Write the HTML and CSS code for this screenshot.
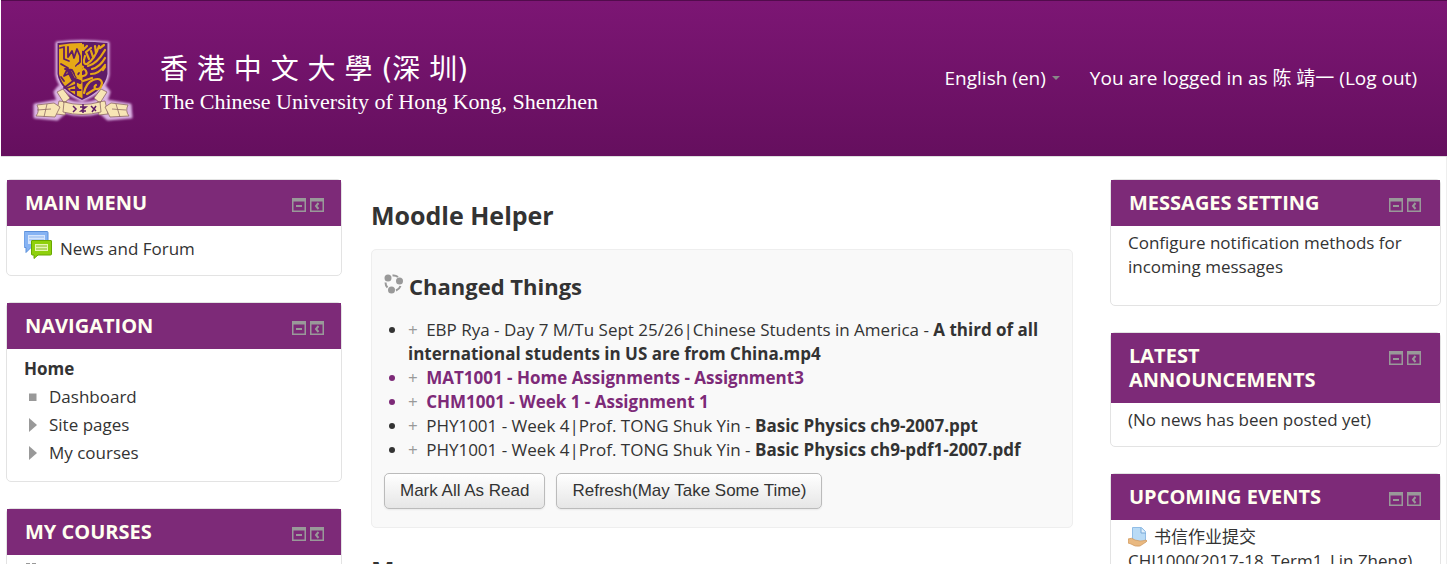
FILE: index.html
```html
<!DOCTYPE html>
<html lang="en">
<head>
<meta charset="utf-8">
<meta name="viewport" content="width=device-width, initial-scale=1">
<title>Moodle</title>
<link rel="stylesheet" href="styles.css">
</head>
<body>
<svg class="defs" aria-hidden="true">
  <symbol id="collapse" viewBox="0 0 14 14"><path d="M0 0h14v14H0zM1.500 3.500v9h11v-9z" fill="#999" fill-rule="evenodd"/><path d="M4 7h6v2H4z" fill="#999"/></symbol>
  <symbol id="dock" viewBox="0 0 14 14"><path d="M0 0h14v14H0zM1.500 3.500v9h11v-9z" fill="#999" fill-rule="evenodd"/><path d="M8.500 5L6 8l2.500 3" fill="none" stroke="#999" stroke-width="2"/></symbol>
</svg>
<header class="banner">
  <a class="brand" href="#">
    <svg class="crest" viewBox="0 0 115 92" aria-hidden="true">
      <defs><filter id="glow" x="-10%" y="-10%" width="120%" height="120%"><feGaussianBlur stdDeviation="1.200"/></filter></defs>
      <g filter="url(#glow)" fill="#dcb4e4" stroke="#dcb4e4" stroke-width="3" stroke-linejoin="round">
        <path d="M32 8Q57 5 83 8V40Q80 57 57 65Q35 57 32 40Z"/>
        <path d="M34 52L40 65Q57 72 75 65L80 52L84 57L81 66L105 70L106 82L83 84L75 77Q57 82 40 77L32 84L10 82L10 70L33 66L30 57Z"/>
      </g>
      <path d="M32.500 8Q57 5.500 82.500 8V39Q80 55 57 65Q35 55 32.500 39Z" fill="#5f1c68"/>
      <path d="M34 10Q45 8 57 8V63Q38 55 34 39Z" fill="#e6a817"/>
      <g fill="none" stroke="#5f1c68" stroke-width="1.800" stroke-linecap="round" stroke-linejoin="round">
        <path d="M35 13l4-1v12l5 2M43 12v10l4-6 2 7 3-9 3 7v6l-4 4M36 29l7 4-4 8 6-3 3 8-9 7M40 34l7 1 4 7 3-4M36 42l3 4M42 53l8-3 4 5M51 47v13M46 55h10" />
        <path d="M44 36l4 8 7 3" stroke-width="4"/>
      </g>
      <g fill="none" stroke="#e6a817" stroke-width="2.200" stroke-linecap="round" stroke-linejoin="round">
        <path d="M58 10v5l4-4M60 21q-3 9 2 8 8-5 12-18M63 31q9-2 17-16M64 24l-3-7 5-4M68 22l-2-6M71 18l-1-7M75 13l4-3M67 34q8-2 13-11M66 39q8 0 14-9M58 32q-6-4-7 4t7 5q5-1 3-5t-5 0M58 46l9-3M59 58q2-10 9-13 8-3 9 3-1 7-6 6-3-2 0-4M62 59l8-5M78 35l2-3"/>
      </g>
      <path d="M57 40v23" stroke="#e6a817"/>
      <g fill="#f7e5b5" stroke="#8e6a65" stroke-width=".8" stroke-linejoin="round">
        <path d="M32 57l6-3 7 9-6 5zM82 57l-6-3-7 9 6 5zM34 66l8 1-2 13-9-1zM80 66l-8 1 2 13 9-1z"/>
        <path d="M12 70l17-2 6 4-5 10-19-1q4-5 1-11zM103 70l-17-2-6 4 5 10 19-1q-4-5-1-11z"/>
        <path d="M39 67q18 5 36 0l1 10q-19 5-38 0zM22 69l-3 13M91 69l4 13M12 75l14-1M87 74l14 1"/>
      </g>
      <path d="M48 71l3 3-3 3M55 72h6l-5 4h5M58 69v9M66 71l5 5M71 71l-4 6" fill="none" stroke="#5f1c68" stroke-width="1.500"/>
    </svg>
    <span class="names"><span class="name-zh" lang="zh-Hant">香 港 中 文 大 學 (深 圳)</span><span class="name-en">The Chinese University of Hong Kong, Shenzhen</span></span>
  </a>
  <nav class="user">
    <button class="lang" type="button">English (en)<span class="caret"></span></button>
    <span>You are logged in as <a href="#" lang="zh">陈 靖一</a> (<a href="#">Log out</a>)</span>
  </nav>
</header>
<div class="page">
  <aside class="side">
    <section class="block">
      <header class="head"><h2>MAIN MENU</h2><span class="tools"><button type="button" aria-label="Hide Main menu"><svg><use href="#collapse"/></svg></button><button type="button" aria-label="Dock Main menu"><svg><use href="#dock"/></svg></button></span></header>
      <div class="body"><a class="forum" href="#">
        <svg class="forum-icon" viewBox="0 0 28 28" aria-hidden="true"><path d="M1 .5h22q1 0 1 1v14q0 1-1 1H7l-5 5v-5H1q-1 0-1-1v-14q0-1 1-1z" fill="#86b3f3" stroke="#5b8fda"/><path d="M4 4h17v9H4z" fill="#d5e5fc"/><path d="M5 6h15M5 9h15" stroke="#8fb5ec"/><path d="M8 9.500h19q.5 0 .5.5v13q0 1-1 1H14l-4 3.500V24H8q-.5 0-.5-1V10q0-.5.5-.5z" fill="#8fd00c" stroke="#69a800"/><path d="M11 13h13v7H11z" fill="#e7f7b3"/><path d="M12 15h11M12 18h11" stroke="#83b91a"/></svg>
        <span>News and Forum</span></a></div>
    </section>
    <section class="block">
      <header class="head"><h2>NAVIGATION</h2><span class="tools"><button type="button" aria-label="Hide Navigation"><svg><use href="#collapse"/></svg></button><button type="button" aria-label="Dock Navigation"><svg><use href="#dock"/></svg></button></span></header>
      <nav class="body tree"><a class="home" href="#">Home</a>
        <ul>
          <li><svg viewBox="0 0 8 14"><path d="M0 3.500h7.500V11H0z"/></svg><a href="#">Dashboard</a></li>
          <li><svg viewBox="0 0 8 14"><path d="M0 0l8 7-8 7z"/></svg><a href="#">Site pages</a></li>
          <li><svg viewBox="0 0 8 14"><path d="M0 0l8 7-8 7z"/></svg><a href="#">My courses</a></li>
        </ul></nav>
    </section>
    <section class="block">
      <header class="head"><h2>MY COURSES</h2><span class="tools"><button type="button" aria-label="Hide My courses"><svg><use href="#collapse"/></svg></button><button type="button" aria-label="Dock My courses"><svg><use href="#dock"/></svg></button></span></header>
      <div class="body courses"><svg class="course-icon" viewBox="0 0 14 14" aria-hidden="true"><path d="M2 1h4M8 1h4M1 7h12M7 2v9" stroke="#999" stroke-width="2"/></svg></div>
    </section>
  </aside>
  <main class="main">
    <h1>Moodle Helper</h1>
    <section class="changes">
      <h2><svg class="ring" viewBox="0 0 20 20" aria-hidden="true"><g fill="#999"><circle cx="4" cy="4" r="3.500"/><circle cx="15.500" cy="7" r="3.500"/><circle cx="7.500" cy="16" r="3.500"/></g><path d="M8.500 1.500q3-.5 5.500 1.500M16.500 12q-1 3-4.500 4.500M1.500 8.500q0 3 2 5" fill="none" stroke="#999" stroke-width="2"/></svg>Changed Things</h2>
      <ul>
        <li><a class="plus" href="#">+</a> EBP Rya - Day 7 M/Tu Sept 25/26|Chinese Students in America - <b>A third of all international students in US are from China.mp4</b></li>
        <li class="new"><a class="plus" href="#">+</a> <b>MAT1001 - Home Assignments - Assignment3</b></li>
        <li class="new"><a class="plus" href="#">+</a> <b>CHM1001 - Week 1 - Assignment 1</b></li>
        <li><a class="plus" href="#">+</a> PHY1001 - Week 4|Prof. TONG Shuk Yin - <b>Basic Physics ch9-2007.ppt</b></li>
        <li><a class="plus" href="#">+</a> PHY1001 - Week 4|Prof. TONG Shuk Yin - <b>Basic Physics ch9-pdf1-2007.pdf</b></li>
      </ul>
      <div class="actions"><button type="button">Mark All As Read</button><button type="button">Refresh(May Take Some Time)</button></div>
    </section>
    <h1 class="next">My courses</h1>
  </main>
  <aside class="side right">
    <section class="block">
      <header class="head"><h2>MESSAGES SETTING</h2><span class="tools"><button type="button" aria-label="Hide Messages setting"><svg><use href="#collapse"/></svg></button><button type="button" aria-label="Dock Messages setting"><svg><use href="#dock"/></svg></button></span></header>
      <div class="body messages"><a href="#">Configure notification methods for incoming messages</a></div>
    </section>
    <section class="block">
      <header class="head"><h2>LATEST ANNOUNCEMENTS</h2><span class="tools"><button type="button" aria-label="Hide Latest announcements"><svg><use href="#collapse"/></svg></button><button type="button" aria-label="Dock Latest announcements"><svg><use href="#dock"/></svg></button></span></header>
      <div class="body">(No news has been posted yet)</div>
    </section>
    <section class="block">
      <header class="head"><h2>UPCOMING EVENTS</h2><span class="tools"><button type="button" aria-label="Hide Upcoming events"><svg><use href="#collapse"/></svg></button><button type="button" aria-label="Dock Upcoming events"><svg><use href="#dock"/></svg></button></span></header>
      <div class="body"><a class="event" href="#"><svg class="task" viewBox="0 0 20 20" aria-hidden="true"><path d="M4.500.5h9l4 4V15h-13z" fill="#b9dbf6" stroke="#91bde6"/><path d="M13 1v5h5" fill="#e3f1fc" stroke="#78a9d8"/><path d="M0 12q4-2 7 1l5 1q3 0 6-1 2 1 0 2l-6 4q-5 1-9-2l-3-1z" fill="#e9b981" stroke="#ce965b" stroke-width=".7"/></svg><span lang="zh">书信作业提交</span></a><a href="#">CHI1000(2017-18_Term1_Lin Zheng)</a></div>
    </section>
  </aside>
</div>
</body>
</html>
```
FILE: styles.css
```css
* { box-sizing: border-box; }
html { overflow: hidden; }
body {
  margin: 0;
  height: 100vh;
  overflow: hidden;
  background: #fff;
  color: #333;
  font: 17px/24px "Open Sans", "Noto Sans CJK SC", sans-serif;
}
a { color: inherit; text-decoration: none; }
h1, h2, ul { margin: 0; padding: 0; }
button { font: inherit; color: inherit; cursor: pointer; }
svg { display: block; flex: none; }
.defs { display: none; }

.banner {
  display: flex;
  align-items: center;
  justify-content: space-between;
  margin: 0 1px;
  padding: 34px 30px 29px 24px;
  border-top: 1px solid #520b4c;
  border-bottom: 1px solid #ddd;
  background: linear-gradient(#7c1674, #650f5e);
  color: #fff;
}
.brand { display: flex; align-items: center; gap: 20px; }
.crest { width: 115px; height: 92px; }
.names { display: flex; flex-direction: column; gap: 2px; padding-top: 8px; }
.name-zh { font: 28px/32px "DejaVu Sans", "Noto Sans CJK TC", sans-serif; }
.name-en { font: 22px/28px "Liberation Serif", serif; }
.user { display: flex; gap: 30px; padding-bottom: 6px; font-size: 19px; }
.lang { display: flex; align-items: center; gap: 6px; padding: 0; border: 0; background: none; }
.caret { border: 4px solid transparent; border-top-color: #888; border-bottom: 0; }

.page {
  display: grid;
  grid-template-columns: 336fr 702fr 339fr;
  gap: 29px;
  align-items: start;
  min-height: 100vh;
  margin-right: 1px;
  padding: 22px 5px 0 6px;
  border-right: 1px solid #eee;
}
.side { display: grid; gap: 26px; }
.right { padding-left: 8px; }
.block { border: 1px solid #e3e3e3; border-radius: 5px; }
.head {
  display: flex;
  align-items: flex-start;
  justify-content: space-between;
  gap: 16px;
  padding: 11px 17px 11px 18px;
  background: #7d2a78;
  color: #fffff0;
}
.head h2 { font-size: 20px; line-height: 24px; }
.right .head { padding-right: 19px; }
.tools { display: flex; gap: 4px; padding-top: 7px; }
.tools button { display: block; padding: 0; border: 0; background: none; }
.tools svg { width: 14px; height: 14px; }
.body { padding: 5px 17px 14px; }
.body > a { display: block; }
.body .forum, .body .event { display: flex; align-items: center; }
.body .forum { align-items: flex-start; gap: 8px; }
.forum span { padding-top: 6px; }
.forum-icon { width: 28px; height: 28px; }
.tree { padding-top: 8px; }
.tree .home { font-weight: 700; }
.tree ul { list-style: none; padding: 2px 0 0 5px; }
.tree li { display: flex; align-items: center; gap: 12px; line-height: 28px; }
.tree svg { width: 8px; height: 14px; fill: #999; }
.courses { padding-top: 8px; }
.course-icon { width: 14px; height: 14px; }
.messages { padding-bottom: 26px; }
.event { gap: 6px; }
.task { width: 20px; height: 20px; }

.main { display: grid; gap: 18px; padding-top: 20px; }
.main h1 { font-size: 25px; line-height: 32px; }
.main .next { padding-top: 8px; }
.changes { padding: 20px 12px 18px; border: 1px solid #eee; border-radius: 5px; background: #f9f9f9; }
.changes h2 { display: flex; align-items: flex-start; gap: 5px; font-size: 22px; line-height: 32px; }
.ring { width: 20px; height: 20px; margin-top: 4px; }
.changes ul { padding: 16px 0 11px 24px; }
.new { color: #7d2a78; }
.plus { margin-right: 4px; color: #999; }
.actions { display: flex; gap: 11px; }
.actions button {
  padding: 5px 15px;
  border: 1px solid #bbb;
  border-radius: 5px;
  background: linear-gradient(#fff, #e6e6e6);
  font-family: "Liberation Sans", Arial, sans-serif;
  box-shadow: 0 1px 2px #0001;
}
```
